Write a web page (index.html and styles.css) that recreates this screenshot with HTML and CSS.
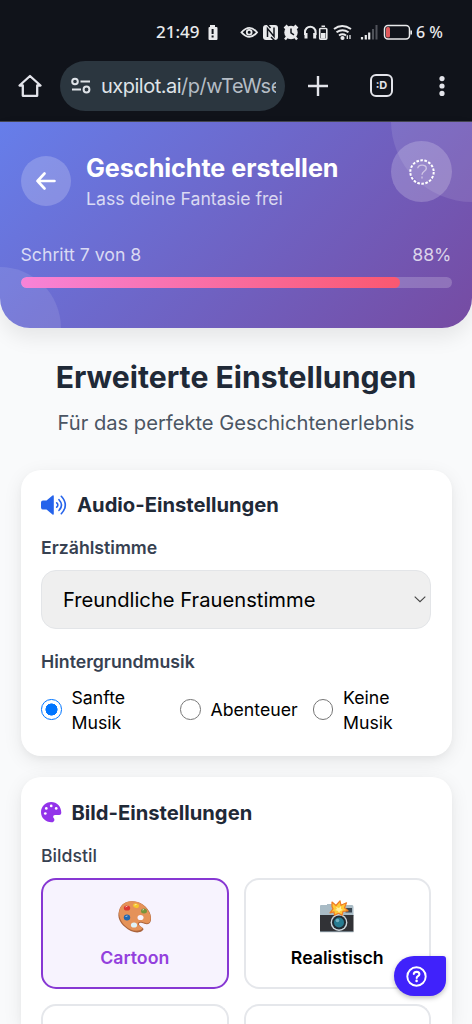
FILE: index.html
```html
<!DOCTYPE html>
<html lang="de">
<head>
<meta charset="utf-8">
<title>Geschichte erstellen</title>
<link rel="stylesheet" href="styles.css">
</head>
<body>
<div class="statusbar">
  <span class="clock">21:49</span>
  <svg class="status-icons" width="206" height="22" viewBox="206 21 206 22" fill="none" stroke="#e9eaec" stroke-width="1.8">
    <path fill="#e9eaec" stroke="none" fill-rule="evenodd" d="M210 25h5v2h1.500q1 0 1 1v11q0 1-1 1h-7q-1 0-1-1V28q0-1 1-1h.5zm1.600 4v5h2v-5zm0 6.500v2h2v-2z"/>
    <path d="M241.500 32.300q8-9 15.500 0q-7.500 9-15.500 0z"/><circle cx="249.200" cy="32.300" r="2.400"/>
    <rect x="263" y="25" width="15" height="15" rx="3" fill="#e9eaec" stroke="none"/><path stroke="#11141b" stroke-width="1.500" d="M267.500 37v-8.500l6.500 8v-9M267.500 24.500l3 3.500M271 37l3.500 3.500"/>
    <circle cx="291" cy="32.500" r="6.700" fill="#e9eaec" stroke="none"/><path stroke-width="2.500" d="m284.500 28.500 3-3m7 0 3 3m-10.500 8.500-2 2.500m10-2.500 2 2.500"/><path stroke="#11141b" stroke-width="1.500" d="M291 28.500v4.300l3 2"/>
    <path stroke-width="2" d="M305 35v-3a5.300 5.300 0 0 1 10.600 0v3"/><path stroke-width="3" d="M306 33v5.500m8.700-5.500v5.500"/>
    <path stroke-width="1.600" d="M320.500 28.500h5.500q.8 0 .8.800v9q0 .8-.8.800h-5.500q-.8 0-.8-.8v-9q0-.8.8-.8zM321.500 26.300h3.500"/><path fill="#e9eaec" stroke="none" d="M321 33h4.500v5.500H321z"/>
    <path stroke-width="2" d="M334 29q8-6 17 0M336.500 32.300q6-4.300 12 0M339 35.500q3.500-2.500 7 0"/><circle cx="342.500" cy="38" r="1.200" fill="#e9eaec"/><path stroke-width="1.300" d="M347.300 39v-3.800M350 35v4"/>
    <path stroke-width="2.200" d="M362 39.500v-2.500M365.800 39.500v-4.500M369.200 39.500v-7"/><path stroke="#50535a" stroke-width="2" d="M373 39.500v-10.500M376.500 39.500v-14.500"/>
    <rect x="384.500" y="25.500" width="25" height="13.500" rx="3.500" stroke-width="1.500"/><rect x="386" y="27" width="4" height="10.500" rx="1.500" fill="#e05a5c" stroke="none"/><path stroke-width="1.700" d="M411.200 30.500v4"/>
  </svg>
  <span class="battery">6 %</span>
</div>
<div class="browserbar">
  <svg class="home" width="24" height="24" viewBox="0 0 24 24" fill="none" stroke="#e3e4ea" stroke-width="2.300" stroke-linejoin="round"><path d="M1.500 11.500 12 2l10.500 9.500h-3.300v10.300H4.800V11.500z"/></svg>
  <div class="url">
    <svg width="20" height="18" viewBox="0 0 20 18" fill="none" stroke="#dfe3e8" stroke-width="2"><circle cx="4" cy="4.500" r="2.800"/><path d="M9.500 4.500H19M1 12.500h9"/><circle cx="15.500" cy="12.500" r="2.900"/></svg>
    <span class="address">uxpilot.ai<span class="path">/p/wTeWse</span></span>
  </div>
  <svg class="plus" width="20" height="20" viewBox="0 0 20 20" stroke="#e3e4ea" stroke-width="2.400"><path d="M10 0v20M0 10h20"/></svg>
  <div class="tabs">:D</div>
  <svg class="dots" width="6" height="20" viewBox="0 0 6 20" fill="#e3e4ea"><circle cx="3" cy="2.600" r="2.600"/><circle cx="3" cy="10" r="2.600"/><circle cx="3" cy="17.400" r="2.600"/></svg>
</div>
<header class="hero">
  <span class="bubble bubble-top"></span><span class="bubble bubble-bottom"></span>
  <div class="hero-row">
    <div class="back"><svg width="20" height="18" viewBox="0 0 20 18" fill="none" stroke="#fff" stroke-width="2.600" stroke-linecap="round" stroke-linejoin="round"><path d="M18.500 9h-17M8.500 1.500 1.500 9l7 7.500"/></svg></div>
    <div><h1>Geschichte erstellen</h1><p class="tagline">Lass deine Fantasie frei</p></div>
  </div>
  <div class="help"><svg width="26" height="26" viewBox="0 0 26 26" fill="none" stroke="#fff"><circle cx="13" cy="13" r="11.700" stroke-width="2" stroke-dasharray="2.600 1.484"/><path stroke="#cec3e4" stroke-width="1.400" d="M8.800 9.300C9 5 17.500 5 17.300 9.400c-.1 3-4.300 2.800-4.300 6.300M13 17.500v2"/></svg></div>
  <div class="steps"><span>Schritt 7 von 8</span><span>88%</span></div>
  <div class="track"><div class="fill"></div></div>
</header>
<main>
  <h2>Erweiterte Einstellungen</h2>
  <p class="subtitle">Für das perfekte Geschichtenerlebnis</p>
  <section class="card audio">
    <h3><svg width="26" height="20" viewBox="0 0 26 20" fill="none" stroke="#2563eb" stroke-width="1.600" stroke-linecap="round"><path fill="#2563eb" stroke="none" d="M0 7.500q0-2 2-2h3.500l6-5q1.300-.8 1.300 1v17q0 1.800-1.300 1l-6-5H2q-2 0-2-2z"/><path d="M15.700 7.800q2.300 2.200 0 4.400M18 4.700q5 5.300 0 10.600M20.300 1.300q8 8.700 0 17.400"/></svg>Audio-Einstellungen</h3>
    <div class="label">Erzählstimme</div>
    <div class="select"><span>Freundliche Frauenstimme</span><svg width="12" height="7" viewBox="0 0 12 7" fill="none" stroke="#444" stroke-width="1.100"><path d="m.7.7 5.300 5 5.300-5"/></svg></div>
    <div class="label label-music">Hintergrundmusik</div>
    <div class="radios">
      <div class="option"><i class="radio checked"></i><span>Sanfte<br>Musik</span></div>
      <div class="option"><i class="radio"></i><span>Abenteuer</span></div>
      <div class="option"><i class="radio"></i><span>Keine<br>Musik</span></div>
    </div>
  </section>
  <section class="card images">
    <h3 class="image-heading"><svg width="21" height="21" viewBox="0 0 21 21"><path fill="#9333ea" d="M20.300 10.700c0 2-1.700 2.300-3.500 2.300h-2.600c-2 0-2.700 1.900-1.400 3.200 1.300 1.400.4 4-1.800 4C5 20.500 0 16 0 10.200S4.500 0 10.200 0s10.100 4.500 10.100 10.700z"/><g fill="#fff"><circle cx="4.300" cy="11.500" r="1.350"/><circle cx="5.300" cy="6.400" r="1.350"/><circle cx="10.200" cy="3.900" r="1.350"/><circle cx="15.200" cy="6.400" r="1.350"/></g></svg>Bild-Einstellungen</h3>
    <div class="label">Bildstil</div>
    <div class="tiles">
      <div class="tile selected">
        <svg width="36" height="34" viewBox="0 0 36 34">
          <path fill="#aa633c" d="M2 11C4 2 13 0 20 2c9 2 15 11 14 18-1 6-6 4-9 3-3-1-4 1-2 3 3 2 5 3 2 5-4 3-12 1-17-4C3 23 0 17 2 11z"/>
          <path fill="#e59258" d="M2.500 10C5 1 14 0 21 2c8 3 14 12 12.500 18-1 5-5 3-8 2-4-1-6 2-3 4 3 1 4 3 1 4-5 2-11 0-15-4C4 22 1 16 2.500 10z"/>
          <ellipse cx="23.500" cy="17.500" rx="3" ry="2.600" fill="#f8f2fc"/><ellipse cx="10" cy="8" rx="3.200" ry="2.600" fill="#dc3830"/><ellipse cx="19" cy="5.600" rx="3" ry="2.200" transform="rotate(15 19 5.600)" fill="#f6c62c"/><ellipse cx="27" cy="11" rx="3" ry="2.500" fill="#78943b"/><ellipse cx="10" cy="17.500" rx="3.200" ry="2.900" fill="#2267ae"/><ellipse cx="17" cy="25" rx="3.100" ry="2.600" fill="#dff3f7"/>
          <path stroke="#fff" stroke-opacity=".65" d="m8.500 7 2-1m7-1 2-.5m6 5.500 1.500-.5m-18.500 7 2-.5"/>
        </svg><span>Cartoon</span>
      </div>
      <div class="tile">
        <svg width="36" height="34" viewBox="0 0 36 34">
          <path fill="#a9bbc5" d="M1 9V6q0-1 1-1h6v-1h5v1h20q1.500 0 1.500 2v9H1z"/><path fill="#313236" d="M1 15h33.500v16q0 1-1 1H2q-1 0-1-1z"/><path stroke="#81909a" d="M1 31.700h33.500"/><path fill="#384550" d="M26.500 8h6.500v4.500h-6.500z"/>
          <circle cx="20" cy="22.500" r="8.400" fill="#ced7dc"/><circle cx="20" cy="22.500" r="7" fill="#202b33"/><circle cx="20" cy="22.500" r="5" fill="#277c91"/><circle cx="18.500" cy="20.500" r="1.800" fill="#70afc0"/>
          <path fill="#ffca37" stroke="#ef7c23" stroke-width="1.200" stroke-linejoin="round" d="m13 2 4 3.500L21 .8l1 4.500 5.500-2.500-2 5 3.500 3-5 .5-1 4-3.500-2-4 2-.5-3.500-4 1 3-4-1-2z"/><path fill="#fff0a0" d="m17 7 3 1 2-2v3l2 1-3 1-1 2-1-2-3-1 2-1z"/>
        </svg><span>Realistisch</span>
      </div>
      <div class="tile tile-cut"></div><div class="tile tile-cut"></div>
    </div>
  </section>
</main>
<div class="fab"><svg width="21" height="21" viewBox="0 0 21 21" fill="none" stroke="#fff"><circle cx="10.500" cy="10.500" r="9.200" stroke-width="1.900"/><path stroke-width="2.100" stroke-linecap="round" stroke-linejoin="round" d="M7.800 7.900c.4-2.800 5.600-2.800 5.600.3 0 2-2.700 1.900-2.700 3.700"/><circle cx="10.600" cy="14.900" r="1.300" fill="#fff" stroke="none"/></svg></div>
</body>
</html>
```
FILE: styles.css
```css
* { box-sizing: border-box; }
body { margin: 0; height: 1024px; overflow: hidden; background: #f9fafb; font-family: Inter, "Liberation Sans", sans-serif; color: #1f2937; position: relative; }
h1, h2, h3, p { margin: 0; }
svg { display: block; flex: none; }
span { white-space: nowrap; }

.statusbar { height: 50px; padding: 14px 0 0 156px; background: #10131a; color: #e9eaec; display: flex; align-items: center; font: 500 17px/36px "Noto Sans", sans-serif; }
.clock { width: 50px; font-size: 17px; }
.battery { margin-left: 4px; font-size: 16px; }

.browserbar { height: 72px; background: #10131a; border-bottom: 1px solid #44464f; display: flex; align-items: center; padding-left: 18px; }
.url { width: 225px; height: 50px; margin-left: 18px; padding: 0 9px 0 11px; border-radius: 25px; background: #2b363f; display: flex; align-items: center; }
.address { margin-left: 10px; width: 175px; overflow: hidden; font: 20px/30px Inter, sans-serif; letter-spacing: -.5px; color: #dfe3e8; }
.path { color: #b5bdc5; }
.plus { margin-left: 23px; }
.tabs { margin-left: 42px; width: 23px; height: 23px; border: 2.200px solid #e3e4ea; border-radius: 6px; color: #e3e4ea; font: 700 11px/18px Inter, sans-serif; text-align: center; }
.dots { margin-left: 46px; }

.hero { position: relative; height: 205.500px; padding: 28.500px 20.500px 0; overflow: hidden; border-radius: 0 0 30px 30px; background: linear-gradient(135deg, #667eea, #764ba2); box-shadow: 0 10px 20px rgba(0,0,0,.08); }
.bubble { position: absolute; border-radius: 50%; }
.bubble-top { width: 162px; height: 162px; right: -81px; top: -82px; background: rgba(255,255,255,.1); }
.bubble-bottom { width: 122px; height: 122px; left: -61px; bottom: -61px; background: rgba(255,255,255,.1); }
.hero-row { display: flex; align-items: center; gap: 15px; height: 61px; position: relative; }
.back { width: 50.500px; height: 50.500px; border-radius: 50%; background: rgba(255,255,255,.2); display: grid; place-items: center; }
h1 { color: #fff; font-size: 25.200px; line-height: 35px; font-weight: 700; white-space: nowrap; letter-spacing: -.05px; }
.tagline { color: rgba(255,255,255,.75); font-size: 17.650px; line-height: 25px; white-space: nowrap; }
.help { position: absolute; right: 20px; top: 19px; width: 61px; height: 61px; border-radius: 50%; background: rgba(255,255,255,.2); display: grid; place-items: center; }
.steps { position: relative; margin-top: 30px; display: flex; justify-content: space-between; font-size: 17.700px; line-height: 25px; color: rgba(255,255,255,.75); }
.track { position: relative; margin-top: 10.500px; height: 10.500px; border-radius: 6px; overflow: hidden; background: rgba(255,255,255,.2); }
.fill { width: 88%; height: 100%; border-radius: 6px; background: linear-gradient(90deg, #f783d8, #fa5870); }

main { height: 696.500px; padding: 29.500px 20.500px 0; overflow: hidden; }
h2 { text-align: center; font-size: 30.200px; line-height: 40px; font-weight: 700; white-space: nowrap; }
.subtitle { margin-top: 11px; text-align: center; color: #4b5563; font-size: 20.150px; line-height: 30px; white-space: nowrap; }
.card { height: 286px; margin-top: 21px; padding: 20.500px; border-radius: 20px; background: #fff; box-shadow: 0 5px 19px rgba(0,0,0,.08), 0 3px 6px rgba(0,0,0,.03); }
.card.audio { margin-top: 32px; padding-top: 20px; }
.card.images { height: 247px; padding-bottom: 0; border-radius: 20px 20px 0 0; overflow: hidden; }
h3 { display: flex; align-items: center; gap: 10px; font-size: 20.200px; line-height: 30px; font-weight: 700; white-space: nowrap; }
h3.image-heading { gap: 9.500px; }
.label { margin-top: 15px; color: #374151; font-size: 17.700px; line-height: 25px; font-weight: 600; }
.image-heading + .label { font-weight: 500; }
.select { height: 59px; margin-top: 10px; padding: 0 4.500px 0 21px; border: 1px solid #e3e5e8; border-radius: 15px; background: #efefef; display: flex; align-items: center; justify-content: space-between; color: #000; font-size: 20.200px; }
.label-music { margin-top: 20px; }
.radios { margin-top: 10.500px; display: grid; grid-template-columns: 139px 132.500px 1fr; align-items: center; color: #000; font-size: 17.700px; line-height: 25px; }
.option { display: flex; align-items: center; gap: 10px; }
.radio { flex: none; width: 20.500px; height: 20.500px; border: 1.500px solid #767676; border-radius: 50%; }
.radio.checked { border-color: #0075ff; background: radial-gradient(circle, #0075ff 0 5.800px, #fff 6.300px); }
.tiles { margin-top: 10.500px; display: grid; grid-template-columns: 1fr 1fr; grid-template-rows: 111px 20px; gap: 15px; }
.tile { border: 2.500px solid #e5e7eb; border-radius: 15px; display: flex; flex-direction: column; align-items: center; padding-top: 19.500px; color: #000; font-size: 17.700px; line-height: 25px; font-weight: 600; }
.tile-cut { border-bottom: 0; border-radius: 15px 15px 0 0; padding: 0; }
.tile span { margin-top: 11px; }
.tile.selected { border-color: #8738d3; background: #f7f3fe; color: #9340dd; }
.fab { position: absolute; left: 394px; top: 956px; width: 52px; height: 40px; padding: 10px 0 0 12px; border-radius: 20px 3px 16px 20px; background: #4022fb; box-shadow: 0 2px 5px rgba(0,0,0,.25); }
```
